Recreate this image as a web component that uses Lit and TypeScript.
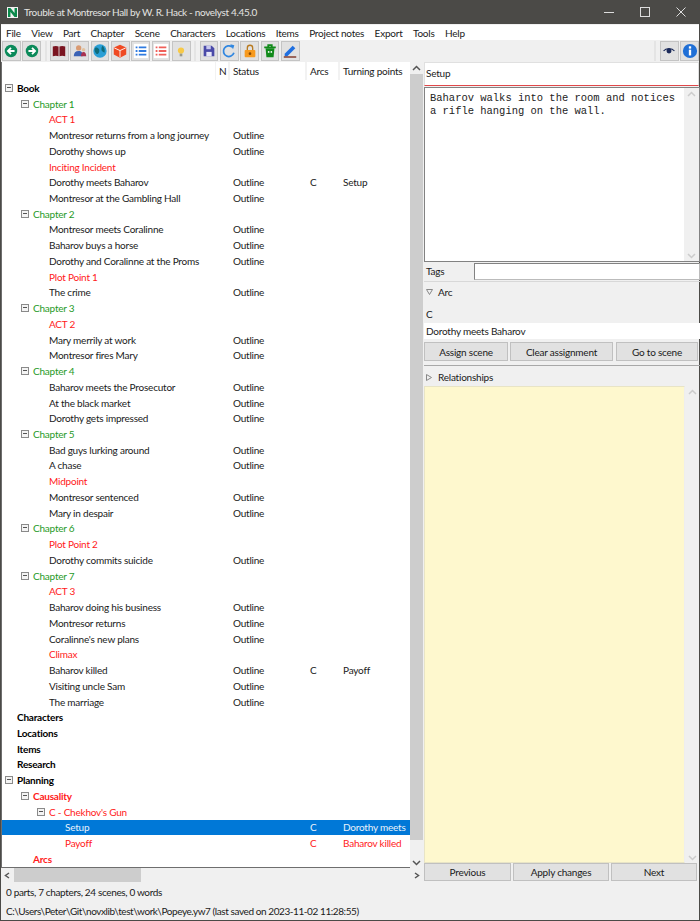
import { LitElement, html, css, svg } from "lit";
import { customElement } from "lit/decorators.js";

type Row = { t: string; k: string; lvl: number; tog?: boolean; st?: string; arc?: string; tp?: string };
const O = "Outline";
const s = (t: string, arc = "", tp = ""): Row => ({ t, k: "scene", lvl: 2, st: O, arc, tp });
const n = (t: string): Row => ({ t, k: "note", lvl: 2 });
const c = (t: string): Row => ({ t, k: "chap", lvl: 1, tog: true });
const top = (t: string, tog = false): Row => ({ t, k: "top", lvl: 0, tog });

const ROWS: Row[] = [
  top("Book", true),
  c("Chapter 1"), n("ACT 1"), s("Montresor returns from a long journey"), s("Dorothy shows up"), n("Inciting Incident"),
  s("Dorothy meets Baharov", "C", "Setup"), s("Montresor at the Gambling Hall"),
  c("Chapter 2"), s("Montresor meets Coralinne"), s("Baharov buys a horse"), s("Dorothy and Coralinne at the Proms"), n("Plot Point 1"), s("The crime"),
  c("Chapter 3"), n("ACT 2"), s("Mary merrily at work"), s("Montresor fires Mary"),
  c("Chapter 4"), s("Baharov meets the Prosecutor"), s("At the black market"), s("Dorothy gets impressed"),
  c("Chapter 5"), s("Bad guys lurking around"), s("A chase"), n("Midpoint"), s("Montresor sentenced"), s("Mary in despair"),
  c("Chapter 6"), n("Plot Point 2"), s("Dorothy commits suicide"),
  c("Chapter 7"), n("ACT 3"), s("Baharov doing his business"), s("Montresor returns"), s("Coralinne's new plans"), n("Climax"),
  s("Baharov killed", "C", "Payoff"), s("Visiting uncle Sam"), s("The marriage"),
  top("Characters"), top("Locations"), top("Items"), top("Research"), top("Planning", true),
  { t: "Causality", k: "plan", lvl: 1, tog: true },
  { t: "C - Chekhov's Gun", k: "note", lvl: 2, tog: true },
  { t: "Setup", k: "sel", lvl: 3, arc: "C", tp: "Dorothy meets" },
  { t: "Payoff", k: "note", lvl: 3, arc: "C", tp: "Baharov killed" },
  { t: "Arcs", k: "plan", lvl: 1 },
];

const MENU = ["File", "View", "Part", "Chapter", "Scene", "Characters", "Locations", "Items", "Project notes", "Export", "Tools", "Help"];

const ICONS = [
  svg`<circle cx="9" cy="9" r="7" fill="#0b8a5a"/><path d="M13 9H6M9 5.500 5.500 9 9 12.500" fill="none" stroke="#fff" stroke-width="2"/>`,
  svg`<circle cx="9" cy="9" r="7" fill="#0b8a5a"/><path d="M5 9h7M9 5.500 12.500 9 9 12.500" fill="none" stroke="#fff" stroke-width="2"/>`,
  null,
  svg`<path d="M2 4c2-1 5-1 6.500 0v11C7 14 4 14 2 15zM9.500 4c1.500-1 4.500-1 6.500 0v11c-2-1-5-1-6.500 0z" fill="#7a1420"/>`,
  svg`<circle cx="7.500" cy="5.500" r="3" fill="#d99a72"/><path d="M2 15c0-4 2-6 5.500-6S12 11 12 15z" fill="#3a62b5"/><circle cx="13" cy="7.500" r="2" fill="#e3c3a0"/><path d="M10 15c0-3 1-5 3-5s3 2 3 5z" fill="#a83250"/>`,
  svg`<circle cx="9" cy="9" r="7.500" fill="#2a9fd6"/><path d="M4 5c3 0 5 2 4 5s-3 3-4 1-2-4 0-6zM12 3c2 2 3 5 2 8l-3-2c-1-3 0-5 1-6z" fill="#0f6b7a"/>`,
  svg`<path d="M9 2l7 3v8l-7 3.500L2 13V5z" fill="#ef4a23"/><path d="M2.500 5.500 9 8.500l6.500-3M9 8.500V16" fill="none" stroke="#fff" stroke-width="1"/>`,
  svg`<rect x="1" y="1" width="16" height="16" fill="#fff"/><path d="M6.500 5H15M6.500 9H15M6.500 13H15M3 5h2M3 9h2M3 13h2" stroke="#2f7be0" stroke-width="2"/>`,
  svg`<rect x="1" y="1" width="16" height="16" fill="#fff"/><path d="M6.500 5H15M6.500 9H15M6.500 13H15M3 5h2M3 9h2M3 13h2" stroke="#f0605a" stroke-width="2"/>`,
  svg`<circle cx="9" cy="8.500" r="3.500" fill="#f7c948"/><rect x="7.500" y="12" width="3" height="3" fill="#9a9a8a"/>`,
  null,
  svg`<path d="M3 3h9l3 3v9H3z" fill="#4a4aa8"/><rect x="6" y="3" width="5" height="4" fill="#c9c9ee"/><rect x="6" y="10" width="6" height="5" fill="#e8e8f8"/>`,
  svg`<path d="M14.500 11A6 6 0 1 1 12.500 4.500" fill="none" stroke="#2f86e0" stroke-width="2"/><path d="M10.500 1.500 15 2.500 13.500 7z" fill="#2f86e0"/>`,
  svg`<path d="M6 8V5.500a3 3 0 0 1 6 0V8" fill="none" stroke="#b87a20" stroke-width="1.500"/><rect x="3" y="8" width="12" height="8" rx="1" fill="#f79a1e"/><circle cx="9" cy="12" r="1.500" fill="#8a4a00"/>`,
  svg`<path d="M2.500 5h13M7 4V2.500h4V4" fill="none" stroke="#118a1a" stroke-width="2"/><path d="M4 6h10l-1 10H5z" fill="#118a1a"/><circle cx="7.500" cy="10" r="1" fill="#fff"/><circle cx="10.500" cy="10" r="1" fill="#fff"/>`,
  svg`<path d="M3 12 12 3l3 3-9 9H3z" fill="#1f6fe0"/><rect x="2" y="15" width="14" height="1.500" fill="#7a2a1a"/>`,
];

@customElement("app-root")
export class AppRoot extends LitElement {
  static styles = css`
    :host { display: block; width: 700px; height: 921px; overflow: hidden; }
    * { box-sizing: border-box; }
    .win { width: 700px; height: 921px; display: flex; flex-direction: column; background: #f0f0f0;
      border: 1px solid #4b4a47; border-top: 0; font: 10px Lato, "Open Sans", sans-serif; letter-spacing: -0.22px; color: #1a1a1a; }
    .title { height: 24px; flex: none; background: #4b4a47; color: #e4e4e2; display: flex; align-items: center; padding-left: 7px; font-size: 10px; letter-spacing: -0.33px; margin: 0 -1px; }
    .logo { width: 11px; height: 11px; background: #f2f2f2; display: grid; place-items: center; margin-right: 6px; }
    .wbtns { margin-left: auto; display: flex; padding-right: 1px; }
    .wbtn { width: 36px; height: 24px; display: grid; place-items: center; }
    .menu { height: 15px; flex: none; margin-top: 1px; background: #fff; display: flex; padding-left: 5px; gap: 10.400px; align-items: center; }
    .tools { height: 22px; flex: none; display: flex; align-items: center; padding-left: 1px; gap: 1.500px; }
    .tb { width: 18.800px; height: 20px; background: #e1e1e1; border: 1px solid #c4c4c4; display: grid; place-items: center; flex: none; }
    .sep { width: 6px; height: 20px; flex: none; display: flex; justify-content: center; }
    .sep::after { content: ""; width: 2px; background: #e4e4e4; }
    .spacer { flex: 1; }
    .main { flex: 1; display: flex; min-height: 0; }
    .left { width: 422px; flex: none; display: flex; flex-direction: column; }
    .treewrap { height: 806px; flex: none; display: flex; }
    .tree { width: 409px; flex: none; background: #fff; border-left: 1px solid #6e6e6e; border-bottom: 1px solid #6e6e6e; overflow: hidden; }
    .cols, .row { display: grid; grid-template-columns: 214px 14px 77px 33px 71px; }
    .cols { height: 18px; align-items: center; }
    .cols div { padding-left: 3px; height: 100%; display: flex; align-items: center; border-right: 2px solid #f2f2f2; white-space: nowrap; }
    .cols div:last-child { border-right: 0; }
    .cols div:first-child { border-right: 1px solid #f2f2f2; }
    .row { height: 15.740px; align-items: center; white-space: nowrap; }
    .name { display: flex; align-items: center; height: 100%; }
    .tog { width: 8px; height: 8px; border: 1px solid #8a8a8a; background: #f4f4f4; position: relative; flex: none; margin-right: 4px; }
    .tog::after { content: ""; position: absolute; left: 1px; right: 1px; top: 2px; height: 1px; background: #555; }
    .st { padding-left: 3px; }
    .tp { padding-left: 3px; overflow: visible; }
    .top { font-weight: 700; color: #000; }
    .chap { color: #1f9a1f; }
    .note { color: #ff1a1a; }
    .plan { color: #ff1a1a; font-weight: 700; }
    .scene { color: #1a1a1a; }
    .sel { background: #0078d7; color: #e8f2fb; }
    .vbar { width: 13px; flex: none; display: flex; flex-direction: column; align-items: center; }
    .arrow { height: 12px; flex: none; display: grid; place-items: center; width: 100%; }
    .thumb { background: #cdcdcd; width: 100%; }
    .track { flex: 1; }
    .hbar { height: 14px; flex: none; display: flex; align-items: center; width: 422px; }
    .hbar .thumb { width: 127px; height: 14px; }
    .harrow { width: 13px; display: grid; place-items: center; flex: none; }
    .hfill { flex: 1; }
    .status { height: 19px; flex: none; padding-left: 5px; display: flex; align-items: center; white-space: nowrap; letter-spacing: -0.35px; }
    .path { letter-spacing: -0.42px; }
    .right { width: 276px; flex: none; display: flex; flex-direction: column; margin-left: 1px; }
    .rtitle { height: 24px; flex: none; background: #fff; border: 1px solid #e0e0e0; border-bottom: 1px solid #e0484a; display: flex; align-items: center; padding: 0 0 2px 1px; margin-right: 1px; }
    .textbox { height: 175px; flex: none; margin-top: 1px; background: #fff; border: 1px solid #828282; display: flex; }
    .txt { flex: 1; padding: 4px 0 0 5px; font: 10.470px/13px "Liberation Mono", monospace; letter-spacing: 0; color: #222; white-space: pre; }
    .sb { width: 15px; flex: none; background: #f0f0f0; display: flex; flex-direction: column; justify-content: space-between; align-items: center; }
    .tags { height: 19px; flex: none; display: flex; align-items: center; padding-left: 2px; }
    .tags label { width: 48px; padding-bottom: 1px; }
    .tags div { flex: 1; height: 17px; background: #fff; border: 1px solid #828282; border-bottom-color: #bbb; border-right-color: #bbb; }
    .head { display: flex; align-items: center; gap: 5px; padding: 2px 0 0 2px; height: 19px; flex: none; border-top: 1px solid #d8d8d8; }
    .c { height: 16px; flex: none; padding-left: 2px; display: flex; align-items: center; margin-top: 6px; }
    .white { height: 16px; flex: none; background: #fff; padding-left: 2px; display: flex; align-items: center; margin-top: 1px; }
    .btns { display: flex; gap: 2px; flex: none; margin-right: 2px; }
    .acts { margin-top: 3px; }
    .btn { height: 19px; background: #e1e1e1; border: 1px solid #c0c0c0; display: grid; place-items: center; }
    .w84 { width: 84px; }
    .w103 { width: 103px; }
    .w82 { width: 82px; margin-left: 1px; }
    .w87 { width: 87px; }
    .w96 { width: 96px; }
    .w86 { width: 86px; }
    .rule { height: 1px; background: #a8a8a8; margin-top: 4px; flex: none; }
    .rel { border: 0; height: 20px; padding-top: 2px; }
    .notes { height: 477px; flex: none; display: flex; }
    .yellow { width: 261px; background: #fef8ce; border: 1px solid #e8e4c6; border-right: 1px solid #eeeeee; flex: none; }
    .notes .sb { width: 14px; }
    .nav .btn { height: 18px; }
  `;

  private chev(d: string, col = "#555") {
    return html`<svg width="9" height="7" viewBox="0 0 9 7"><path d=${d} fill="none" stroke=${col} stroke-width="1.500"/></svg>`;
  }

  private row(r: Row) {
    const pad = 3 + r.lvl * 16;
    const textPad = r.tog ? 0 : 12;
    return html`<div class="row ${r.k === "sel" ? "sel" : ""} ${r.k === "note" || r.k === "plan" ? "note" : ""}">
      <div class="name ${r.k}" style="padding-left:${pad + textPad}px">
        ${r.tog ? html`<span class="tog"></span>` : ""}<span>${r.t}</span>
      </div>
      <div></div>
      <div class="st">${r.st ?? ""}</div>
      <div class="st">${r.arc ?? ""}</div>
      <div class="tp">${r.tp ?? ""}</div>
    </div>`;
  }

  render() {
    return html`<div class="win">
      <div class="title">
        <span class="logo"><svg width="9" height="9" viewBox="0 0 11 11"><path d="M0 0h3l5 6V0h3v11H8L3 5v6H0z" fill="#0c8a4c"/></svg></span>
        Trouble at Montresor Hall by W. R. Hack - novelyst 4.45.0
        <div class="wbtns">
          <div class="wbtn"><svg width="10" height="10"><path d="M0 5.500h10" stroke="#ddd"/></svg></div>
          <div class="wbtn"><svg width="10" height="10"><rect x=".5" y=".5" width="9" height="9" fill="none" stroke="#ddd"/></svg></div>
          <div class="wbtn"><svg width="10" height="10"><path d="M.5.500l9 9M9.500.500l-9 9" stroke="#ddd"/></svg></div>
        </div>
      </div>
      <div class="menu">${MENU.map((m) => html`<span>${m}</span>`)}</div>
      <div class="tools">
        ${ICONS.map((i) => i ? html`<div class="tb"><svg width="16" height="16" viewBox="0 0 18 18">${i}</svg></div>` : html`<div class="sep"></div>`)}
        <div class="spacer"></div>
        <div class="sep"></div>
        <div class="tb"><svg width="14" height="14" viewBox="0 0 18 18"><path d="M2 9c3-4 11-4 14 0" fill="none" stroke="#1b2a5a" stroke-width="1.500"/><circle cx="9" cy="9" r="3.200" fill="#1b2a5a"/></svg></div>
        <div class="tb"><svg width="16" height="16" viewBox="0 0 18 18"><circle cx="9" cy="9" r="8" fill="#1f6fd6"/><rect x="7.700" y="7.500" width="2.600" height="6.500" fill="#fff"/><rect x="7.700" y="3.700" width="2.600" height="2.600" fill="#fff"/></svg></div>
      </div>
      <div class="main">
        <div class="left">
          <div class="treewrap">
            <div class="tree">
              <div class="cols"><div></div><div>N</div><div>Status</div><div>Arcs</div><div>Turning points</div></div>
              ${ROWS.map((r) => this.row(r))}
            </div>
            <div class="vbar">
              <div class="arrow">${this.chev("M1 5l3.500-3.500L8 5")}</div>
              <div class="thumb" style="height:766px"></div>
              <div class="track"></div>
              <div class="arrow">${this.chev("M1 2l3.500 3.500L8 2")}</div>
            </div>
          </div>
          <div class="hbar">
            <div class="harrow">${this.chev("M6 1L2.500 3.500 6 6")}</div>
            <div class="thumb"></div>
            <div class="hfill"></div>
            <div class="harrow">${this.chev("M3 1l3.500 2.500L3 6")}</div>
          </div>
          <div class="status">0 parts, 7 chapters, 24 scenes, 0 words</div>
          <div class="status path">C:\\Users\\Peter\\Git\\novxlib\\test\\work\\Popeye.yw7 (last saved on 2023-11-02 11:28:55)</div>
        </div>
        <div class="right">
          <div class="rtitle">Setup</div>
          <div class="textbox">
            <div class="txt">Baharov walks into the room and notices
a rifle hanging on the wall.</div>
            <div class="sb"><div class="arrow">${this.chev("M1 5l3.500-3.500L8 5", "#ccc")}</div><div class="arrow">${this.chev("M1 2l3.500 3.500L8 2", "#ccc")}</div></div>
          </div>
          <div class="tags"><label>Tags</label><div></div></div>
          <div class="head"><svg width="7" height="6"><path d="M.5.500h6L3.500 5.500z" fill="none" stroke="#888"/></svg><span>Arc</span></div>
          <div class="c">C</div>
          <div class="white">Dorothy meets Baharov</div>
          <div class="btns acts">
            <div class="btn w84">Assign scene</div>
            <div class="btn w103">Clear assignment</div>
            <div class="btn w82">Go to scene</div>
          </div>
          <div class="rule"></div>
          <div class="head rel"><svg width="7" height="7"><path d="M.5.500v6l5-3z" fill="none" stroke="#888"/></svg><span>Relationships</span></div>
          <div class="notes">
            <div class="yellow"></div>
            <div class="sb"><div class="arrow">${this.chev("M1 5l3.500-3.500L8 5", "#ccc")}</div><div class="arrow">${this.chev("M1 2l3.500 3.500L8 2", "#ccc")}</div></div>
          </div>
          <div class="btns nav">
            <div class="btn w87">Previous</div>
            <div class="btn w96">Apply changes</div>
            <div class="btn w86">Next</div>
          </div>
        </div>
      </div>
    </div>`;
  }
}
